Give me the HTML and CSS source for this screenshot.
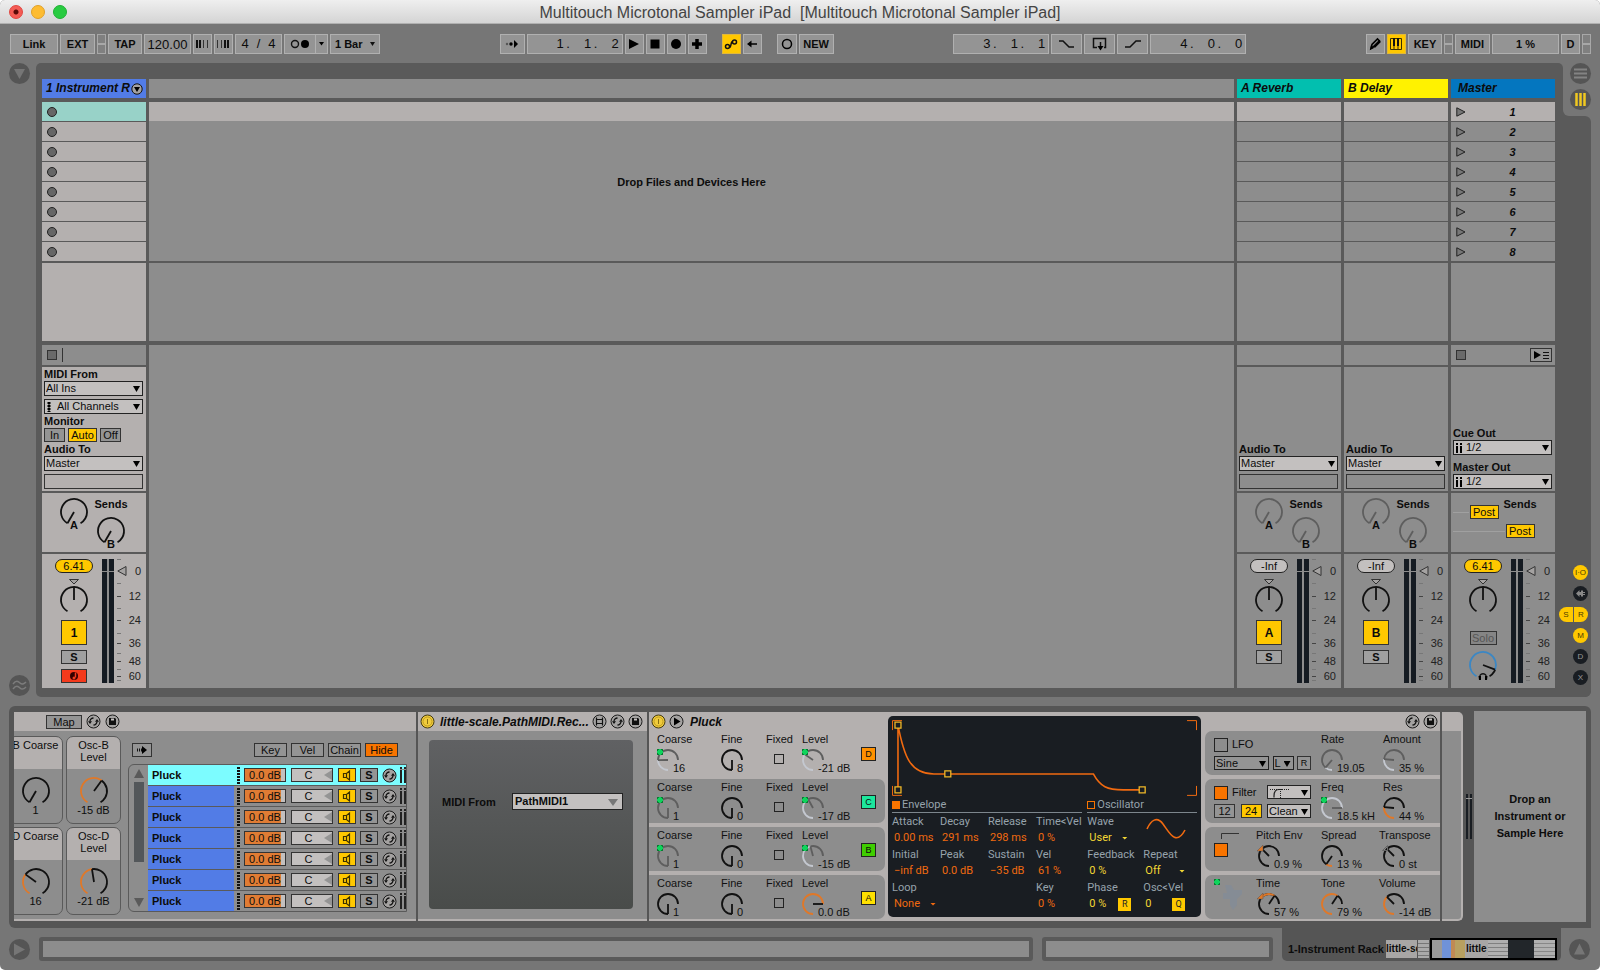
FILE: index.html
```html
<!DOCTYPE html>
<html lang="en">
<head>
<meta charset="utf-8">
<title>Multitouch Microtonal Sampler iPad</title>
<link rel="stylesheet" href="styles.css">
</head>
<body>
<svg class="defs" aria-hidden="true">
  <symbol id="knob" viewBox="0 0 30 30"><g transform="translate(15 15)"><circle class="ring" r="13" pathLength="360"/><circle class="arc" r="13" pathLength="360"/><line class="ptr" x2="13"/></g></symbol>
  <symbol id="dial" viewBox="0 0 22 22"><g transform="translate(11 11)"><circle class="dring" r="10" pathLength="360"/><circle class="darc" r="10" pathLength="360"/><line class="dptr" x2="10"/></g></symbol>
  <symbol id="map" viewBox="0 0 6 6"><path d="M0 0h6v6H0z" fill="#0b7a34"/><path d="M1 1h4v4H1zM2 0h2v6H2zM0 2h6v2H0z" fill="#0fd45c"/></symbol>
  <symbol id="swap" viewBox="0 0 15 15"><circle cx="7.500" cy="7.500" r="6.500" fill="#a4a2a1" stroke="#1c1c1c"/><path d="M4 7.500A3.500 3.500 0 0 1 7.500 4M11 7.500A3.500 3.500 0 0 1 7.500 11" fill="none" stroke="#111" stroke-width="1.300"/><path d="M2 7.300h4L4 10zM9 7.700h4L11 5z" fill="#111"/></symbol>
  <symbol id="save" viewBox="0 0 15 15"><circle cx="7.500" cy="7.500" r="6.500" fill="#a4a2a1" stroke="#1c1c1c"/><path d="M4 4h6l1 1v6H4z" fill="#111"/><path d="M6 4.500h3v2H6z" fill="#c4c0bf"/></symbol>
  <symbol id="power" viewBox="0 0 15 15"><circle cx="7.500" cy="7.500" r="6.500" fill="#f0cc3c" stroke="#443a10"/><circle cx="7.500" cy="7.500" r="4.500" fill="none" stroke="#c09c20"/><path d="M7.500 5v5" stroke="#8a7010"/></symbol>
  <symbol id="speaker" viewBox="0 0 16 13"><path d="M4.500 4.500h3l3-2.500v9l-3-2.500h-3zM7.500 4.500v4" fill="none" stroke="#3a3000" stroke-width="1.200"/></symbol>
  <symbol id="handle" viewBox="0 0 10 10"><path d="M9 .5v9L.8 5z" fill="#a4a2a1" stroke="#333"/></symbol>
  <symbol id="pan" viewBox="0 0 10 6"><path d="M.5.500h9L5 5z" fill="#a4a2a1" stroke="#333"/></symbol>
  <symbol id="launch" viewBox="0 0 10 10"><path d="M.8.800v8.400L9 5z" fill="#777" stroke="#222"/></symbol>
  <symbol id="ticks" viewBox="0 0 5 124"><path d="M0 37.500h4M0 61.500h4M0 84.500h4M0 102.500h4M0 117.500h4" stroke="#444"/><path d="M0 .5h4M0 24.500h4M0 49.500h4M0 74.500h4M0 94.500h4M0 110.500h4M0 121.500h4" stroke="#777"/></symbol>
</svg>
<div class="app">
  <header class="titlebar">
    <span class="light red"></span><span class="light amber"></span><span class="light green"></span>
    <h1>Multitouch Microtonal Sampler iPad&nbsp; [Multitouch Microtonal Sampler iPad]</h1>
  </header>

  <nav class="toolbar">
    <div class="group">
      <button class="tb w48">Link</button><button class="tb w35">EXT</button>
      <span class="leds"><i></i><i></i></span>
      <button class="tb w34">TAP</button>
      <input class="tb tempo" aria-label="Tempo" value="120.00">
      <button class="tb w19" aria-label="Nudge down"><svg width="13" height="10"><path d="M1 1v8M4 1v8" stroke="#111" stroke-width="2"/><path d="M7.500 1v8M11.500 1v8" stroke="#333"/></svg></button>
      <button class="tb w19" aria-label="Nudge up"><svg width="13" height="10"><path d="M.5 1v8M4.500 1v8" stroke="#333"/><path d="M8 1v8M11 1v8" stroke="#111" stroke-width="2"/></svg></button>
      <div class="tb sig"><span>4</span><span>/</span><span>4</span></div>
      <button class="tb w44" aria-label="Metronome"><svg width="38" height="18"><circle cx="8" cy="9" r="3.500" fill="none" stroke="#111" stroke-width="1.400"/><circle cx="18" cy="9" r="4" fill="#000"/><path d="M28.500 0v18" stroke="#b0b0b0"/><path d="M32 7h5l-2.500 3.500z"/></svg></button>
      <span class="tb barsel"><select aria-label="Quantization"><option>1 Bar</option></select></span>
    </div>
    <div class="group">
      <button class="tb w25" aria-label="Follow"><svg width="14" height="10"><circle cx="2" cy="5" r="1.200" fill="#555"/><circle cx="6" cy="5" r="1.700"/><path d="M9 1v8l4-4z"/></svg></button>
      <div class="tb pos"><span>1&thinsp;.</span><span>1&thinsp;.</span><span>2</span></div>
      <button class="tb w19" aria-label="Play"><svg width="12" height="12"><path d="M1 1v10l10-5z"/></svg></button>
      <button class="tb w19" aria-label="Stop"><svg width="12" height="12"><path d="M1.500 1.500h9v9h-9z"/></svg></button>
      <button class="tb w19" aria-label="Record"><svg width="12" height="12"><circle cx="6" cy="6" r="5"/></svg></button>
      <button class="tb w19" aria-label="Overdub"><svg width="12" height="12"><path d="M6 1v10M1 6h10" stroke="#000" stroke-width="3.500"/></svg></button>
      <button class="tb w19 on apart" aria-label="Automation arm"><svg width="14" height="12"><g fill="none" stroke="#111" stroke-width="1.500"><circle cx="3.500" cy="8.500" r="2"/><circle cx="10.500" cy="4" r="2"/><path d="M5.500 9.500c2 0 1-6 3-6"/></g></svg></button>
      <button class="tb w19" aria-label="Re-enable automation"><svg width="12" height="12"><path d="M4 6h7" stroke="#000" stroke-width="1.500"/><path d="M1 6l4.500-3.500v7z"/></svg></button>
      <button class="tb w20 apart" aria-label="Session record"><svg width="12" height="12"><circle cx="6" cy="6" r="4.500" fill="none" stroke="#000" stroke-width="1.500"/></svg></button>
      <button class="tb w35">NEW</button>
    </div>
    <div class="group">
      <div class="tb pos"><span>3&thinsp;.</span><span>1&thinsp;.</span><span>1</span></div>
      <button class="tb w31" aria-label="Punch in"><svg width="18" height="12"><path d="M1 3h4l6 6h5" fill="none" stroke="#111" stroke-width="1.500"/></svg></button>
      <button class="tb w31" aria-label="Loop"><svg width="18" height="14"><path d="M6 10.500H2.500v-9h12v9H13" fill="none" stroke="#111" stroke-width="1.500"/><path d="M9.500 5v5" stroke="#111" stroke-width="1.500"/><path d="M6.500 9h6l-3 4.500z"/></svg></button>
      <button class="tb w31" aria-label="Punch out"><svg width="18" height="12"><path d="M1 9h5l6-6h5" fill="none" stroke="#111" stroke-width="1.500"/></svg></button>
      <div class="tb pos"><span>4&thinsp;.</span><span>0&thinsp;.</span><span>0</span></div>
    </div>
    <div class="group">
      <button class="tb w19" aria-label="Draw"><svg width="14" height="14"><path d="M3 11.500l1-4L9.500 2l2 2-5.500 5.500z" fill="none" stroke="#000" stroke-width="1.600"/><path d="M2 13l1-5 3 3z"/><path d="M6 10l6-6" stroke="#000" stroke-width="2.500"/></svg></button>
      <button class="tb w19 on" aria-label="Computer keyboard"><svg width="14" height="14"><path d="M1.500 1.500h11v11h-11zM5 9v3M9 9v3" fill="none" stroke="#3a3000"/><path d="M4 1h2v8H4zM8 1h2v8H8z" fill="#111"/></svg></button>
      <button class="tb w34">KEY</button><span class="leds"><i></i><i></i></span>
      <button class="tb w35">MIDI</button><div class="tb cpu">1 %</div><button class="tb w19">D</button><span class="leds"><i></i><i></i></span>
    </div>
  </nav>

  <main class="session">
    <div class="rail">
      <button class="orb" aria-label="Show browser"><svg width="21" height="21"><path d="M5 6h11l-5.500 10z" fill="#767676"/></svg></button>
      <button class="orb" aria-label="Groove pool"><svg width="21" height="21"><path d="M4 9c3-4 5-3 7-1s4 1 6-1M4 14c3-4 5-3 7-1s4 1 6-1" fill="none" stroke="#7c7c7c" stroke-width="1.500"/></svg></button>
    </div>
    <div class="tracks">
      <section class="col track">
        <div class="head blue"><h2>1 Instrument R</h2><svg width="12" height="12"><circle cx="6" cy="6" r="5.200" fill="#a4a2a1" stroke="#111"/><path d="M3 4h6L6 9z"/></svg></div>
        <div class="slots"><div class="slot mint"><i></i></div><div class="slot"><i></i></div><div class="slot"><i></i></div><div class="slot"><i></i></div><div class="slot"><i></i></div><div class="slot"><i></i></div><div class="slot"><i></i></div><div class="slot"><i></i></div></div>
        <div class="fill"></div>
        <div class="stoprow"><i class="stop"></i><i class="bar"></i></div>
        <div class="io">
          <label for="mf">MIDI From</label>
          <span class="sel"><select id="mf"><option>All Ins</option></select></span>
          <span class="sel iconed second"><svg width="4" height="10"><path d="M2 0v10" stroke="#000" stroke-width="3" stroke-dasharray="2 1"/><path d="M2 0v10" stroke="#000"/></svg><select aria-label="MIDI channel"><option>All Channels</option></select></span>
          <span class="cap">Monitor</span>
          <div class="monitor"><button class="btn">In</button><button class="btn yellow">Auto</button><button class="btn">Off</button></div>
          <label for="at1">Audio To</label>
          <span class="sel"><select id="at1"><option>Master</option></select></span>
          <div class="blank"></div>
        </div>
        <div class="sends">
          <div class="send"><svg class="knob" style="--v:0"><use href="#knob"/></svg><b>A</b></div>
          <div class="send"><b class="ttl">Sends</b><svg class="knob" style="--v:0"><use href="#knob"/></svg><b>B</b></div>
        </div>
        <div class="mixer">
          <div class="strip"><span class="pill yellow">6.41</span><svg class="pan"><use href="#pan"/></svg><svg class="knob" style="--v:.5"><use href="#knob"/></svg><button class="act">1</button><button class="btn solo">S</button><button class="btn arm" aria-label="Arm"><svg width="10" height="10"><circle cx="5" cy="5" r="4" fill="#300"/><path d="M6.500 1.500v5" stroke="#f43a1c" stroke-width="1.500"/><circle cx="5" cy="7" r="1.500" fill="#f43a1c"/></svg></button></div>
          <div class="meter"></div>
          <div class="ticks"><svg class="handle"><use href="#handle"/></svg><svg class="tk"><use href="#ticks"/></svg></div>
          <div class="scale"><span>0</span><span>12</span><span>24</span><span>36</span><span>48</span><span>60</span></div>
        </div>
      </section>

      <section class="col drop">
        <div class="head"></div>
        <div class="zone"><div class="slot lit"></div><p>Drop Files and Devices Here</p></div>
        <div class="fill"></div>
        <div class="lower"></div>
      </section>

      <section class="col">
        <div class="head teal"><h2>A Reverb</h2></div>
        <div class="slots"><div class="slot lit"></div><div class="slot"></div><div class="slot"></div><div class="slot"></div><div class="slot"></div><div class="slot"></div><div class="slot"></div><div class="slot"></div></div>
        <div class="fill"></div>
        <div class="stoprow"></div>
        <div class="io">
          <label for="at2">Audio To</label>
          <span class="sel"><select id="at2"><option>Master</option></select></span>
          <div class="blank"></div>
        </div>
        <div class="sends dim">
          <div class="send"><svg class="knob" style="--v:0"><use href="#knob"/></svg><b>A</b></div>
          <div class="send"><b class="ttl">Sends</b><svg class="knob" style="--v:0"><use href="#knob"/></svg><b>B</b></div>
        </div>
        <div class="mixer">
          <div class="strip"><span class="pill">-Inf</span><svg class="pan"><use href="#pan"/></svg><svg class="knob" style="--v:.5"><use href="#knob"/></svg><button class="act">A</button><button class="btn solo">S</button></div>
          <div class="meter"></div>
          <div class="ticks"><svg class="handle"><use href="#handle"/></svg><svg class="tk"><use href="#ticks"/></svg></div>
          <div class="scale"><span>0</span><span>12</span><span>24</span><span>36</span><span>48</span><span>60</span></div>
        </div>
      </section>

      <section class="col">
        <div class="head lemon"><h2>B Delay</h2></div>
        <div class="slots"><div class="slot lit"></div><div class="slot"></div><div class="slot"></div><div class="slot"></div><div class="slot"></div><div class="slot"></div><div class="slot"></div><div class="slot"></div></div>
        <div class="fill"></div>
        <div class="stoprow"></div>
        <div class="io">
          <label for="at3">Audio To</label>
          <span class="sel"><select id="at3"><option>Master</option></select></span>
          <div class="blank"></div>
        </div>
        <div class="sends dim">
          <div class="send"><svg class="knob" style="--v:0"><use href="#knob"/></svg><b>A</b></div>
          <div class="send"><b class="ttl">Sends</b><svg class="knob" style="--v:0"><use href="#knob"/></svg><b>B</b></div>
        </div>
        <div class="mixer">
          <div class="strip"><span class="pill">-Inf</span><svg class="pan"><use href="#pan"/></svg><svg class="knob" style="--v:.5"><use href="#knob"/></svg><button class="act">B</button><button class="btn solo">S</button></div>
          <div class="meter"></div>
          <div class="ticks"><svg class="handle"><use href="#handle"/></svg><svg class="tk"><use href="#ticks"/></svg></div>
          <div class="scale"><span>0</span><span>12</span><span>24</span><span>36</span><span>48</span><span>60</span></div>
        </div>
      </section>

      <section class="col">
        <div class="head navy"><h2>Master</h2></div>
        <div class="slots scenes"><div class="slot lit"><svg><use href="#launch"/></svg><b>1</b></div><div class="slot"><svg><use href="#launch"/></svg><b>2</b></div><div class="slot"><svg><use href="#launch"/></svg><b>3</b></div><div class="slot"><svg><use href="#launch"/></svg><b>4</b></div><div class="slot"><svg><use href="#launch"/></svg><b>5</b></div><div class="slot"><svg><use href="#launch"/></svg><b>6</b></div><div class="slot"><svg><use href="#launch"/></svg><b>7</b></div><div class="slot"><svg><use href="#launch"/></svg><b>8</b></div></div>
        <div class="fill"></div>
        <div class="stoprow"><i class="stop"></i><button class="btn back" aria-label="Back to arrangement"><svg width="18" height="10"><path d="M2 1v8l7-4z"/><path d="M11 2.500h6M11 5.500h6M11 8.500h6" stroke="#111"/></svg></button></div>
        <div class="io">
          <label for="co">Cue Out</label>
          <span class="sel iconed"><svg width="6" height="10"><path d="M1 0v2M5 0v2M1 3v7M5 3v7" stroke="#000" stroke-width="2"/></svg><select id="co"><option>1/2</option></select></span>
          <label class="mo" for="mo">Master Out</label>
          <span class="sel iconed"><svg width="6" height="10"><path d="M1 0v2M5 0v2M1 3v7M5 3v7" stroke="#000" stroke-width="2"/></svg><select id="mo"><option>1/2</option></select></span>
        </div>
        <div class="sends posts">
          <div class="send"><button class="btn yellow">Post</button></div>
          <div class="send"><b class="ttl">Sends</b><button class="btn yellow">Post</button></div>
        </div>
        <div class="mixer">
          <div class="strip"><span class="pill yellow">6.41</span><svg class="pan"><use href="#pan"/></svg><svg class="knob" style="--v:.5"><use href="#knob"/></svg><button class="btn cuesolo">Solo</button><svg class="knob cue" style="--v:.87"><use href="#knob"/><path d="M12.500 29c-4-7 9-7 5 0" fill="none" stroke="#111" stroke-width="1.300"/><path d="M10.500 26h2.500v4h-2zM17 26h2.500l-.5 4h-2z"/></svg></div>
          <div class="meter"></div>
          <div class="ticks"><svg class="handle"><use href="#handle"/></svg><svg class="tk"><use href="#ticks"/></svg></div>
          <div class="scale"><span>0</span><span>12</span><span>24</span><span>36</span><span>48</span><span>60</span></div>
        </div>
      </section>
    </div>
    <div class="side">
      <div class="tabs">
        <button class="orb" aria-label="Arrangement"><svg width="21" height="21"><path d="M4 6.500h13M4 10.500h13M4 14.500h13" stroke="#838383" stroke-width="2"/></svg></button>
        <button class="orb" aria-label="Session"><svg width="21" height="21"><path d="M6.500 4v13M10.500 4v13M14.500 4v13" stroke="#f0c820" stroke-width="2.500"/></svg></button>
      </div>
      <div class="toggles">
        <button class="dot on">I·O</button>
        <button class="dot" aria-label="Returns"><svg width="15" height="15"><path d="M3 7.500L6.500 4v2H8V4.500h2V6h2v1H10v1h2v1h-2v1.500H8V9H6.500v2z" fill="#888"/></svg></button>
        <span class="pair"><button class="on">S</button><button class="on">R</button></span>
        <button class="dot on">M</button><button class="dot">D</button><button class="dot">X</button>
      </div>
    </div>
  </main>

  <section class="devices">
    <article class="rack">
      <div class="dhead"><button class="btn mapbtn">Map</button><svg class="ic"><use href="#swap"/></svg><svg class="ic"><use href="#save"/></svg></div>
      <div class="rackbody">
        <div class="macros">
          <div class="macro"><span>B Coarse</span><svg class="knob" style="--v:0"><use href="#knob"/></svg><em>1</em></div>
          <div class="macro"><span>Osc-B<br>Level</span><svg class="knob" style="--v:.62"><use href="#knob"/></svg><em>-15 dB</em></div>
          <div class="macro"><span>D Coarse</span><svg class="knob" style="--v:.32"><use href="#knob"/></svg><em>16</em></div>
          <div class="macro"><span>Osc-D<br>Level</span><svg class="knob" style="--v:.47"><use href="#knob"/></svg><em>-21 dB</em></div>
        </div>
        <div class="chains">
          <div class="chbar"><button class="btn auto" aria-label="Auto select"><svg width="12" height="8"><path d="M1 4h5" stroke="#111" stroke-width="3" stroke-dasharray="1 1"/><path d="M6 0v8l5-4z"/></svg></button><button class="btn first">Key</button><button class="btn">Vel</button><button class="btn">Chain</button><button class="btn orange">Hide</button></div>
          <div class="chbox">
            <div class="scroll"><svg width="10" height="9"><path d="M5 0l5 9H0z" fill="#5a5a5a"/></svg><i></i><svg width="10" height="9"><path d="M5 9L0 0h10z" fill="#5a5a5a"/></svg></div>
            <div class="chlist">
              <div class="chain sel1"><b>Pluck</b><i class="dots"></i><span class="vol">0.0 dB</span><span class="cpan">C</span><button class="btn yellow" aria-label="Activate"><svg width="16" height="13"><use href="#speaker"/></svg></button><button class="btn">S</button><svg class="ic"><use href="#swap"/></svg><i class="mm"></i></div>
              <div class="chain"><b>Pluck</b><i class="dots"></i><span class="vol">0.0 dB</span><span class="cpan">C</span><button class="btn yellow" aria-label="Activate"><svg width="16" height="13"><use href="#speaker"/></svg></button><button class="btn">S</button><svg class="ic"><use href="#swap"/></svg><i class="mm"></i></div>
              <div class="chain"><b>Pluck</b><i class="dots"></i><span class="vol">0.0 dB</span><span class="cpan">C</span><button class="btn yellow" aria-label="Activate"><svg width="16" height="13"><use href="#speaker"/></svg></button><button class="btn">S</button><svg class="ic"><use href="#swap"/></svg><i class="mm"></i></div>
              <div class="chain"><b>Pluck</b><i class="dots"></i><span class="vol">0.0 dB</span><span class="cpan">C</span><button class="btn yellow" aria-label="Activate"><svg width="16" height="13"><use href="#speaker"/></svg></button><button class="btn">S</button><svg class="ic"><use href="#swap"/></svg><i class="mm"></i></div>
              <div class="chain"><b>Pluck</b><i class="dots"></i><span class="vol">0.0 dB</span><span class="cpan">C</span><button class="btn yellow" aria-label="Activate"><svg width="16" height="13"><use href="#speaker"/></svg></button><button class="btn">S</button><svg class="ic"><use href="#swap"/></svg><i class="mm"></i></div>
              <div class="chain"><b>Pluck</b><i class="dots"></i><span class="vol">0.0 dB</span><span class="cpan">C</span><button class="btn yellow" aria-label="Activate"><svg width="16" height="13"><use href="#speaker"/></svg></button><button class="btn">S</button><svg class="ic"><use href="#swap"/></svg><i class="mm"></i></div>
              <div class="chain"><b>Pluck</b><i class="dots"></i><span class="vol">0.0 dB</span><span class="cpan">C</span><button class="btn yellow" aria-label="Activate"><svg width="16" height="13"><use href="#speaker"/></svg></button><button class="btn">S</button><svg class="ic"><use href="#swap"/></svg><i class="mm"></i></div>
            </div>
          </div>
        </div>
      </div>
    </article>

    <article class="m4l">
      <div class="dhead"><svg class="ic"><use href="#power"/></svg><h3>little-scale.PathMIDI.Rec...</h3><svg class="ic" viewBox="0 0 15 15"><circle cx="7.500" cy="7.500" r="6.500" fill="#a4a2a1" stroke="#1c1c1c"/><path d="M4.500 5.500h6v4h-6zM4.500 3.500v8M10.500 3.500v8" fill="none" stroke="#111" stroke-width="1.200"/></svg><svg class="ic"><use href="#swap"/></svg><svg class="ic"><use href="#save"/></svg></div>
      <div class="patch"><label for="pm">MIDI From</label><span class="sel hollow"><select id="pm"><option>PathMIDI1</option></select></span></div>
    </article>

    <article class="operator">
      <div class="oscs">
        <div class="dhead"><svg class="ic"><use href="#power"/></svg><svg class="ic" viewBox="0 0 15 15"><circle cx="7.500" cy="7.500" r="6.500" fill="#a4a2a1" stroke="#1c1c1c"/><path d="M5 3.500v8l6.500-4z"/></svg><h3>Pluck</h3></div>
        <div class="osc clear">
          <div class="ctl"><span>Coarse</span><div><svg class="dial mapped" style="--v:.33"><use href="#dial"/><use href="#map" width="6" height="6"/></svg><em>16</em></div></div>
          <div class="ctl"><span>Fine</span><div><svg class="dial" style="--v:0"><use href="#dial"/></svg><em>8</em></div></div>
          <label class="ctl mid">Fixed<input type="checkbox"></label>
          <div class="ctl"><span>Level</span><div><svg class="dial mapped" style="--v:.46"><use href="#dial"/><use href="#map" width="6" height="6"/></svg><em>-21 dB</em></div></div>
          <button class="letter lo">D</button>
        </div>
        <div class="osc">
          <div class="ctl"><span>Coarse</span><div><svg class="dial mapped" style="--v:0"><use href="#dial"/><use href="#map" width="6" height="6"/></svg><em>1</em></div></div>
          <div class="ctl"><span>Fine</span><div><svg class="dial" style="--v:0"><use href="#dial"/></svg><em>0</em></div></div>
          <label class="ctl mid">Fixed<input type="checkbox"></label>
          <div class="ctl"><span>Level</span><div><svg class="dial mapped" style="--v:.56"><use href="#dial"/><use href="#map" width="6" height="6"/></svg><em>-17 dB</em></div></div>
          <button class="letter lc">C</button>
        </div>
        <div class="osc">
          <div class="ctl"><span>Coarse</span><div><svg class="dial mapped" style="--v:0"><use href="#dial"/><use href="#map" width="6" height="6"/></svg><em>1</em></div></div>
          <div class="ctl"><span>Fine</span><div><svg class="dial" style="--v:0"><use href="#dial"/></svg><em>0</em></div></div>
          <label class="ctl mid">Fixed<input type="checkbox"></label>
          <div class="ctl"><span>Level</span><div><svg class="dial mapped" style="--v:.61"><use href="#dial"/><use href="#map" width="6" height="6"/></svg><em>-15 dB</em></div></div>
          <button class="letter lb">B</button>
        </div>
        <div class="osc">
          <div class="ctl"><span>Coarse</span><div><svg class="dial" style="--v:0"><use href="#dial"/></svg><em>1</em></div></div>
          <div class="ctl"><span>Fine</span><div><svg class="dial" style="--v:0"><use href="#dial"/></svg><em>0</em></div></div>
          <label class="ctl mid">Fixed<input type="checkbox"></label>
          <div class="ctl"><span>Level</span><div><svg class="dial" style="--v:1"><use href="#dial"/></svg><em>0.0 dB</em></div></div>
          <button class="letter la">A</button>
        </div>
      </div>

      <div class="display">
        <svg class="graph" viewBox="0 0 306 76"><g fill="none" stroke="#f06a10" stroke-width="1"><path d="M.5 10V.5H10M296 .5h9.500V10M.5 66v9.500H10M296 75.500h9.500V66"/><path stroke-width="1.600" d="M6 70V5C12 36 18 54 42 54H202C209 67 216 70 232 70H251"/></g><g fill="#191d22" stroke="#f0b828" stroke-width="1.300"><path d="M3 2h6v6H3zM3 67h6v6H3zM53 51h6v6h-6zM248 67h6v6h-6z"/></g></svg>
        <div class="params">
          <div class="env">
            <h4><i></i>Envelope</h4>
            <dl><dt>Attack</dt><dd>0.00 ms</dd></dl><dl><dt>Decay</dt><dd>291 ms</dd></dl><dl><dt>Release</dt><dd>298 ms</dd></dl><dl><dt>Time&lt;Vel</dt><dd>0 %</dd></dl>
            <dl><dt>Initial</dt><dd>−inf dB</dd></dl><dl><dt>Peak</dt><dd>0.0 dB</dd></dl><dl><dt>Sustain</dt><dd>−35 dB</dd></dl><dl><dt>Vel</dt><dd>61 %</dd></dl>
            <dl class="wide"><dt>Loop</dt><dd>None <u></u></dd></dl><dl><dt>Key</dt><dd>0 %</dd></dl>
          </div>
          <div class="wav">
            <h4><i class="open"></i>Oscillator</h4>
            <dl><dt>Wave</dt><dd>User <u></u></dd></dl><svg width="42" height="24"><path d="M3 12C7 3 13-1 19 7S32 30 41 13" fill="none" stroke="#f06a10" stroke-width="1.600"/></svg>
            <dl><dt>Feedback</dt><dd>0 %</dd></dl><dl><dt>Repeat</dt><dd class="spread">Off <u></u></dd></dl>
            <dl><dt>Phase</dt><dd class="spread">0 % <button>R</button></dd></dl><dl><dt>Osc&lt;Vel</dt><dd class="spread">0 <button>Q</button></dd></dl>
          </div>
        </div>
      </div>

      <div class="globals">
        <div class="dhead end"><svg class="ic"><use href="#swap"/></svg><svg class="ic"><use href="#save"/></svg></div>
        <div class="grow">
          <div class="opts">
            <label class="chk"><input type="checkbox">LFO</label>
            <div class="line"><span class="sel gray s55"><select aria-label="LFO wave"><option>Sine</option></select></span><span class="sel gray s21"><select aria-label="LFO range"><option>L</option></select></span><button class="btn r14">R</button></div>
          </div>
          <div class="ctl"><span>Rate</span><div><svg class="dial off" style="--v:.15"><use href="#dial"/></svg><em>19.05</em></div></div>
          <div class="ctl"><span>Amount</span><div><svg class="dial off" style="--v:.35"><use href="#dial"/></svg><em>35 %</em></div></div>
        </div>
        <div class="grow">
          <div class="opts">
            <div class="line"><label class="chk"><input type="checkbox" checked>Filter</label><span class="sel s44 ftype"><svg width="20" height="10"><path d="M4 9.500V8c0-5 2-6.500 5-6.500h3" fill="none" stroke="#222" stroke-width="1.200"/><path d="M0 1.500h20M10.500 3v7" stroke="#222" stroke-dasharray="1 1"/></svg><select aria-label="Filter type"><option></option></select></span></div>
            <div class="line"><button class="btn s21">12</button><button class="btn yellow s21">24</button><span class="sel s44"><select aria-label="Circuit"><option>Clean</option></select></span></div>
          </div>
          <div class="ctl"><span>Freq</span><div><svg class="dial off" style="--v:1"><use href="#dial"/><use href="#map" width="6" height="6"/></svg><em>18.5 kH</em></div></div>
          <div class="ctl"><span>Res</span><div><svg class="dial" style="--v:.35"><use href="#dial"/></svg><em>44 %</em></div></div>
        </div>
        <div class="grow four">
          <div class="opts one"><svg width="26" height="8"><path d="M7.500 8V2.500H25" fill="none" stroke="#333"/></svg><label class="chk"><input type="checkbox" checked aria-label="Pitch envelope"></label></div>
          <div class="ctl"><span>Pitch Env</span><div><svg class="dial none inset" style="--v:.5"><use href="#dial"/><path d="M-1 6L5 0v6z" fill="#e07828" stroke="#555" stroke-width=".5"/></svg><em>0.9 %</em></div></div>
          <div class="ctl"><span>Spread</span><div><svg class="dial" style="--v:.13"><use href="#dial"/></svg><em>13 %</em></div></div>
          <div class="ctl"><span>Transpose</span><div><svg class="dial none" style="--v:.5"><use href="#dial"/><path d="M-.5 5.500L4.500.500v5z" fill="none" stroke="#666"/></svg><em>0 st</em></div></div>
        </div>
        <div class="grow four">
          <div class="opts one"><svg width="30" height="34"><use href="#map" width="6" height="6"/><path d="M11 6h6l3 5h8v4l-5 5v6l-4 5-3-5v-6H9v-6h4z" fill="#7d8ca0" opacity=".45"/></svg></div>
          <div class="ctl"><span>Time</span><div><svg class="dial bi inset" style="--v:.79"><use href="#dial"/><path d="M-1 6L5 0v6z" fill="#e07828" stroke="#555" stroke-width=".5"/></svg><em>57 %</em></div></div>
          <div class="ctl"><span>Tone</span><div><svg class="dial" style="--v:.79"><use href="#dial"/></svg><em>79 %</em></div></div>
          <div class="ctl"><span>Volume</span><div><svg class="dial" style="--v:.5"><use href="#dial"/></svg><em>-14 dB</em></div></div>
        </div>
      </div>
    </article>
    <div class="rackend"></div>
    <i class="outmeter"></i>
    <p class="dropdev">Drop an<br>Instrument or<br>Sample Here</p>
  </section>

  <footer class="footer">
    <button class="orb" aria-label="Preview"><svg width="21" height="21"><path d="M5 4.500v12l11-6z" fill="#767676"/></svg></button>
    <div class="field long"></div>
    <div class="field"></div>
    <div class="overview">
      <b>1-Instrument Rack</b>
      <div class="mini m1">little-sc</div><div class="mini m2"></div>
      <div class="mini m3"><i class="a"></i><span>little</span><i class="b"></i><i class="c"></i><i class="d"></i></div>
    </div>
    <button class="orb" aria-label="Hide devices"><svg width="21" height="21"><path d="M10.500 4.500l5.500 11H5z" fill="#767676"/></svg></button>
  </footer>
</div>
</body>
</html>
```

FILE: styles.css
```css
* { box-sizing: border-box; }
body { margin: 0; background: #fff; font: 11px/14px "Liberation Sans", Arial, sans-serif; color: #0c0c0c; }
h1, h2, h3, h4, p, dl, dd { margin: 0; }
em { font-style: normal; }
svg { display: block; flex: none; }
button, input, select { font: inherit; color: inherit; margin: 0; padding: 0; border-radius: 0; }
.defs { position: absolute; width: 0; height: 0; }
.app { min-height: 100vh; display: flex; flex-direction: column; background: #767676; border-radius: 5px; overflow: hidden; }

.titlebar { position: relative; height: 24px; display: flex; align-items: center; gap: 8px; padding: 0 9px; background: linear-gradient(#efefef, #d4d4d4); border-bottom: 1px solid #b0b0b0; }
.titlebar h1 { position: absolute; inset: 0; text-align: center; font-size: 16px; line-height: 25px; font-weight: 400; color: #444; }
.light { width: 14px; height: 14px; border-radius: 50%; }
.red { background: radial-gradient(#5a0a08 2px, #f45b54 3px); border: 1px solid #e0443e; }
.amber { background: #fdbc32; border: 1px solid #e0a028; }
.green { background: #28cb41; border: 1px solid #1fb034; }

.toolbar { height: 39px; display: flex; justify-content: space-between; padding: 10px 9px 0 10px; }
.group { display: flex; gap: 2px; }
.tb { height: 20px; border: 1px solid #b0b0b0; background: #949494; font-weight: 700; line-height: 18px; display: flex; align-items: center; justify-content: center; }
.tb.on { background: #ffc800; border-color: #e0b83c; }
.leds { width: 9px; display: grid; gap: 0; height: 20px; }
.leds i { border: 1px solid #a8a8a8; background: #808080; }
.apart { margin-left: 13px; }
.w19 { width: 19px; } .w20 { width: 20px; } .w25 { width: 25px; } .w31 { width: 31px; } .w34 { width: 34px; } .w35 { width: 35px; } .w44 { width: 44px; } .w48 { width: 48px; }
.tempo { width: 47px; font-size: 13px; font-weight: 400; text-align: center; }
.sig { width: 47px; gap: 8px; font-size: 13px; font-weight: 400; }
.pos { width: 96px; justify-content: flex-end; gap: 14px; padding-right: 3px; font-size: 13px; font-weight: 400; }
.cpu { width: 67px; }
.barsel { position: relative; width: 50px; }
.barsel select { appearance: none; border: 0; background: none; width: 100%; padding-left: 4px; font-weight: 700; }
.barsel::after { content: ""; position: absolute; right: 4px; top: 7px; width: 5px; height: 4px; background: #111; clip-path: polygon(0 0, 100% 0, 50% 100%); }

.orb { width: 21px; height: 21px; border: 0; border-radius: 50%; background: #555; }
.session { flex: 1; display: flex; padding-right: 9px; }
.rail { width: 36px; display: flex; flex-direction: column; justify-content: space-between; padding: 0 0 1px 9px; }
.tracks { flex: 1; display: grid; grid-template-columns: 104px 1fr 104px 104px 104px; gap: 3px; background: #5a5a5a; border-radius: 5px 5px 0 5px; padding: 16px 8px 9px 6px; }
.col { display: flex; flex-direction: column; min-width: 0; }
.head { height: 19px; margin-bottom: 4px; background: #8d8d8d; display: flex; align-items: center; padding: 0 3px 0 4px; overflow: hidden; }
.head h2 { flex: 1; font: italic 700 12px/19px "Liberation Sans", Arial, sans-serif; white-space: nowrap; min-width: 0; }
.blue { background: #527ce6; } .teal { background: #02bfaf; } .lemon { background: #fff200; } .navy { background: #0476bf; padding-left: 7px; }
.slots { display: grid; gap: 1px; margin-bottom: 2px; }
.slot { height: 19px; background: #8d8d8d; display: flex; align-items: center; padding-left: 5px; }
.slot i { width: 10px; height: 10px; border-radius: 50%; background: #666; border: 1px solid #222; }
.track .slot, .track .fill, .track .io, .track .sends, .track .mixer, .slot.lit { background: #b4b0af; }
.track .slot.mint { background: #98d2c8; }
.scenes svg { width: 10px; height: 10px; }
.scenes .slot b { flex: 1; text-align: center; font-style: italic; padding: 0 8px 0 12px; }
.fill { flex: 1; min-height: 78px; background: #8d8d8d; margin-bottom: 4px; }
.zone { height: 159px; background: #8d8d8d; margin-bottom: 2px; text-align: center; font-weight: 700; }
.zone p { padding-top: 54px; }
.lower { height: 343px; background: #8d8d8d; }
.stoprow { height: 20px; background: #8d8d8d; margin-bottom: 2px; display: flex; align-items: center; padding: 0 3px 0 5px; }
.stop { width: 10px; height: 10px; background: #6a6a6a; border: 1px solid #333; }
.bar { width: 1px; height: 14px; background: #333; margin-left: 5px; }
.back { margin-left: auto; width: 22px; }
.io { height: 124px; background: #8d8d8d; margin-bottom: 2px; padding: 0 3px 2px 2px; display: flex; flex-direction: column; justify-content: flex-end; }
.io label, .cap { font-weight: 700; line-height: 14px; }
.io .mo { margin-top: 5px; }
.sel { position: relative; display: block; height: 15px; border: 1px solid #222; background: #c3c0bf; }
.sel select { appearance: none; display: block; border: 0; background: none; width: 100%; height: 13px; line-height: 13px; padding-left: 1px; }
.sel::after { content: ""; position: absolute; right: 2px; top: 4px; width: 7px; height: 6px; background: #000; clip-path: polygon(0 0, 100% 0, 50% 100%); pointer-events: none; }
.sel > svg { position: absolute; left: 2px; top: 2px; }
.iconed select { padding-left: 12px; }
.second { margin: 3px 0 0; }
.blank { height: 15px; border: 1px solid #333; margin-top: 3px; }
.btn { height: 14px; border: 1px solid #333; background: #949494; line-height: 12px; display: flex; align-items: center; justify-content: center; }
.btn.yellow, .pill.yellow { background: #ffc800; }
.btn.orange { background: #f87400; }
.monitor { display: flex; gap: 3px; }
.monitor .btn { width: 21px; }
.monitor .yellow { width: 29px; }

.sends { height: 59px; background: #8d8d8d; margin-bottom: 2px; display: flex; gap: 7px; padding: 4px 0 0 17px; }
.send { width: 30px; display: flex; flex-direction: column; align-items: center; }
.send b { line-height: 12px; margin-top: -8px; }
.send .ttl { margin: 1px 0 6px; }
.knob { width: 30px; height: 30px; overflow: visible; --ring: #111; --ptr: #111; --arc: none; --k: 0; }
.ring, .arc { fill: none; stroke: var(--ring); stroke-width: 1.8; transform: rotate(120deg); }
.ring { stroke-dasharray: 0px calc(var(--v) * var(--k) * 300px) calc(300px - var(--v) * var(--k) * 300px) 360px; }
.arc { stroke: var(--arc); stroke-dasharray: calc(var(--v) * 300px) 360px; }
.ptr { stroke: var(--ptr); stroke-width: 1.8; transform: rotate(calc(120deg + var(--v) * 300deg)); }
.dim .knob { --ring: #5e5e5e; --ptr: #5e5e5e; }
.knob.cue { --arc: #3b87c4; --k: 1; }
.sends.posts { gap: 6px; padding-left: 18px; background: linear-gradient(#a0a0a0, #a0a0a0) 2px 19px / 16px 1px no-repeat, linear-gradient(#a0a0a0, #a0a0a0) 2px 38px / 52px 1px no-repeat, #8d8d8d; }
.posts .btn { width: 29px; }
.posts .send:first-child { padding-top: 8px; }
.posts .ttl { margin-bottom: 14px; }
.posts .send { flex: none; width: 30px; }

.mixer { height: 134px; background: #8d8d8d; padding: 5px 0 0 13px; display: flex; }
.strip { width: 38px; margin-right: 9px; display: flex; flex-direction: column; align-items: center; }
.pill { width: 38px; height: 14px; line-height: 12px; border: 1px solid #222; border-radius: 7px; background: #c3c0bf; text-align: center; }
.pan { width: 10px; height: 6px; margin: 6px 0 0; }
.act { width: 26px; height: 25px; margin: 5px 0 5px; border: 1px solid #333; background: #ffc800; font-size: 12px; font-weight: 700; }
.solo { width: 26px; font-weight: 700; margin-bottom: 5px; background: #a0a0a0; }
.arm { width: 26px; background: #f43a1c; }
.cuesolo { width: 27px; margin: 16px 0 5px; color: #555; background: #858585; }
.meter { width: 12px; height: 124px; margin-right: 3px; background: linear-gradient(#8d8d8d, #8d8d8d) 0 12px / 12px 1px no-repeat, linear-gradient(90deg, #151b22 5px, #8d8d8d 5px, #8d8d8d 7px, #151b22 7px); }
.ticks { width: 10px; }
.handle { width: 10px; height: 10px; margin-top: 7px; }
.tk { width: 5px; height: 124px; margin-top: -17px; }
.scale { flex: 1; display: grid; grid-template-rows: 25px 24px 23px 18px 15px 14px; align-content: start; padding: 5px 5px 0 0; text-align: right; color: #222; }

.side { width: 28px; display: flex; flex-direction: column; border-radius: 0 0 6px 0; background: linear-gradient(#767676, #767676) 6px 0 / 22px 60px no-repeat, #5a5a5a; }
.tabs { height: 53px; background: #767676; border-radius: 0 0 0 6px; padding-left: 7px; display: grid; align-content: start; gap: 5px; }
.toggles { flex: 1; display: flex; flex-direction: column; align-items: flex-end; justify-content: flex-end; gap: 6px; padding: 0 3px 12px 0; font-size: 8px; border-radius: 0 6px 6px 0; background: #5a5a5a; }
.dot { width: 15px; height: 15px; border: 0; border-radius: 50%; background: #191d22; color: #999; line-height: 15px; text-align: center; }
.toggles .on { background: #ffc800; color: #4a3c00; }
.pair { display: flex; gap: 1px; margin-left: -8px; }
.pair button { width: 14px; height: 15px; border: 0; line-height: 15px; border-radius: 0 8px 8px 0; }
.pair button:first-child { border-radius: 8px 0 0 8px; }

.devices { height: 222px; margin: 9px 9px 0; padding: 6px 5px 7px; background: #555; border-radius: 6px 6px 0 6px; display: flex; }
.dhead { height: 19px; background: #b4b0af; display: flex; align-items: center; gap: 3px; padding: 0 6px 0 2px; }
.dhead h3 { flex: 1; font: italic 700 12px/18px "Liberation Sans", Arial, sans-serif; white-space: nowrap; }
.ic { width: 15px; height: 15px; }
.rack { width: 402px; background: #8d8d8d; border-bottom: 2px solid #b4b0af; overflow: hidden; }
.rack > .dhead { padding-left: 32px; gap: 4px; }
.mapbtn { width: 36px; }
.rackbody { display: flex; padding-top: 5px; }
.macros { display: grid; grid-template-columns: 55px 55px; grid-template-rows: 88px 88px; gap: 3px; margin-left: -6px; }
.macro { border: 1px solid #5a5a5a; border-radius: 7px; background: linear-gradient(#b4b0af 32px, #8d8d8d 32px); display: flex; flex-direction: column; align-items: center; text-align: center; white-space: nowrap; line-height: 12px; overflow: hidden; }
.macro span { height: 39px; padding-top: 2px; }
.macro .knob { --arc: #e07828; --k: 1; }
.macro em { line-height: 14px; margin-top: -3px; }
.chains { width: 279px; margin-left: 7px; padding-top: 7px; }
.chbar { display: flex; gap: 4px; padding-left: 4px; margin-bottom: 7px; }
.chbar .btn { width: 33px; }
.chbar .auto { width: 20px; }
.chbar .first { margin-left: 98px; }
.chbox { display: flex; height: 148px; border: 1px solid #5a5a5a; border-radius: 6px 0 0 6px; }
.scroll { width: 19px; display: flex; flex-direction: column; align-items: center; padding: 4px 0 4px; }
.scroll i { width: 10px; height: 80px; background: #53575a; margin: 4px 0 auto; }
.chlist { flex: 1; display: grid; gap: 1px; background: #5a5a5a; grid-auto-rows: 20px; }
.chain { display: flex; align-items: center; background: #8d8d8d; }
.chain b { width: 86px; line-height: 20px; padding-left: 4px; background: #527ce6; }
.sel1, .chain.sel1 b { background: #7cfcff; }
.dots { width: 3px; height: 17px; margin: 0 4px 0 3px; background: repeating-linear-gradient(#111 0 2px, transparent 2px 3px); }
.vol, .cpan { width: 42px; height: 14px; line-height: 12px; border: 1px solid #333; text-align: center; margin-right: 5px; }
.vol { background: linear-gradient(90deg, #e07c34 36px, #c3c0bf 36px); }
.cpan { background: #c3c0bf; position: relative; padding-right: 7px; }
.cpan::after { content: ""; position: absolute; right: 0; top: 1px; width: 8px; height: 10px; background: #949494; clip-path: polygon(100% 0, 100% 100%, 0 50%); }
.chain .btn { width: 18px; margin-right: 4px; font-weight: 700; }
.mm { width: 6px; height: 16px; margin-left: 3px; background: linear-gradient(transparent 2px, #8d8d8d 2px, #8d8d8d 3px, transparent 3px), linear-gradient(90deg, #222 2px, transparent 2px, transparent 4px, #222 4px); }

.m4l { width: 229px; margin: 0 2px; background: #8d8d8d; border-bottom: 2px solid #b4b0af; }
.m4l h3 { padding-left: 2px; }
.patch { margin: 9px 14px 9px 11px; height: 169px; border-radius: 4px; background: linear-gradient(#606163, #494c4a); display: flex; align-items: flex-start; justify-content: space-between; padding: 53px 10px 0 13px; }
.patch label { font-weight: 700; line-height: 17px; padding-top: 1px; }
.hollow { width: 111px; height: 17px; font-weight: 700; }
.hollow select { height: 15px; padding-left: 2px; }
.sel.hollow::after { width: 10px; height: 7px; top: 5px; background: #777; right: 4px; }

.operator { flex: 1; display: flex; background: #b4b0af; min-width: 0; }
.oscs { width: 236px; display: grid; grid-template-rows: 15px; grid-auto-rows: 44px; row-gap: 4px; }
.oscs .dhead, .globals .dhead { background: none; }
.oscs h3 { padding-left: 3px; }
.osc { display: grid; grid-template-columns: 64px 45px 36px 59px 15px; padding: 1px 0 0 8px; background: #8d8d8d; border-radius: 0 7px 7px 0; }
.osc.clear { background: none; }
.ctl { display: flex; flex-direction: column; white-space: nowrap; color: #111; }
.ctl > span { line-height: 14px; margin-bottom: 3px; }
.ctl > div { display: flex; }
.ctl em { margin: 12px 0 -6px -6px; line-height: 14px; }
.dial { width: 22px; height: 22px; overflow: visible; --ring: #111; --ptr: #111; --arc: #e07828; --k: 1; --o: 0; }
.dial.mapped, .dial.off { --ring: #5e5e5e; --ptr: #5e5e5e; --arc: #c4c8d0; }
.dial.none { --arc: none; --k: 0; }
.dial.bi { --k: 0; --o: .5; }
.dial.inset { margin-left: 2px; }
.dring, .darc { fill: none; stroke: var(--ring); stroke-width: 1.8; transform: rotate(90deg); }
.dring { stroke-dasharray: 0px calc(var(--v) * var(--k) * 270px) calc(270px - var(--v) * var(--k) * 270px) 360px; }
.darc { stroke: var(--arc); stroke-dasharray: 0px calc(var(--o) * 270px) calc((var(--v) - var(--o)) * 270px) 360px; }
.bi .darc { stroke-width: 2.4; }
.dptr { stroke: var(--ptr); stroke-width: 1.8; transform: rotate(calc(90deg + var(--v) * 270deg)); }
.mid { align-items: flex-start; }
.mid input { appearance: none; width: 10px; height: 10px; border: 1px solid #222; margin: 8px 0 0 8px; }
.letter { width: 15px; height: 14px; margin-top: 15px; border: 1px solid #222; font-size: 9px; line-height: 12px; }
.lo { background: #ff9000; } .lc { background: #1ce69c; } .lb { background: #3fce00; } .la { background: #ffe000; }

.display { flex: 1; margin: 4px 4px 4px 3px; background: #191d22; border-radius: 5px; padding: 4px 4px 0; font: 11px/16px Roboto, sans-serif; min-width: 300px; }
.graph { width: 100%; height: 76px; }
.params { display: grid; grid-template-columns: 191fr 110fr; gap: 5px; padding-top: 2px; }
.env { display: grid; grid-template-columns: 48px 48px 48px 1fr; grid-auto-rows: 33px; color: #f06a10; }
.wav { display: grid; grid-template-columns: 56px 1fr; grid-auto-rows: 33px; color: #f4d834; }
.env, .wav { grid-template-rows: 15px; align-content: start; }
.params h4 { grid-column: 1 / -1; font-weight: 400; font-size: 11px; line-height: 14px; color: #97a3ac; border-bottom: 1px solid #7d868d; display: flex; align-items: center; gap: 2px; }
.params h4 i { width: 8px; height: 8px; background: #f87400; }
.params h4 .open { background: none; border: 1px solid #f87400; }
.params dt { color: #97a3ac; line-height: 17px; }
.params dl { white-space: nowrap; }
.params dd { padding-left: 2px; line-height: 16px; display: flex; align-items: center; gap: 10px; }
.params .wide { grid-column: span 3; }
.params u { width: 6px; height: 3px; background: currentColor; clip-path: polygon(0 0, 100% 0, 50% 100%); }
.params .spread { justify-content: space-between; padding-right: 12px; }
.params button { width: 13px; height: 13px; border: 0; background: #ffc800; color: #222; font-size: 9px; line-height: 13px; }
.wav svg { margin: 4px 0 0 1px; }

.globals { width: 235px; display: grid; grid-template-rows: 15px; grid-auto-rows: 44px; row-gap: 4px; }
.globals .end { justify-content: flex-end; padding-right: 2px; }
.grow { display: grid; grid-template-columns: 108px 62px 1fr; padding: 1px 0 0 8px; background: #8d8d8d; border-radius: 7px 0 0 7px; }
.grow.four { grid-template-columns: 43px 65px 62px 1fr; }
.four .ctl:last-child > span { margin-left: -4px; }
.opts { display: grid; gap: 4px; align-content: start; padding: 5px 10px 0 1px; }
.opts.one { padding: 3px 0 0 1px; gap: 4px; }
.line { display: flex; justify-content: space-between; }
.chk { display: flex; align-items: center; gap: 4px; line-height: 15px; }
.chk input { appearance: none; width: 14px; height: 14px; border: 1px solid #222; }
.chk input:checked { background: #f87400; }
.opts .sel { height: 14px; }
.opts .gray { background: #949494; }
.opts .sel select { height: 12px; line-height: 12px; }
.s55 { width: 55px; } .s21 { width: 21px; } .s44 { width: 44px; } .r14 { width: 14px; font-size: 9px; }
.rackend { width: 21px; margin-left: 2px; border-radius: 0 5px 5px 0; background: linear-gradient(#b4b0af 19px, #8d8d8d 19px); border: solid #b4b0af; border-width: 0 2px 2px 0; }
.outmeter { width: 6px; height: 45px; margin: 82px 2px 0 3px; background: linear-gradient(transparent 4px, #999 4px, #999 5px, transparent 5px), linear-gradient(90deg, #191d22 2px, #555 2px, #555 4px, #191d22 4px); }
.dropdev { width: 112px; height: 211px; margin-top: -1px; background: #8d8d8d; display: grid; place-content: center; text-align: center; font-weight: 700; line-height: 17px; }

.footer { height: 42px; display: flex; padding: 0 10px 0 9px; }
.footer .orb { margin-top: 11px; }
.field { width: 231px; height: 24px; margin: 9px 9px 0 0; border: 4px solid #5a5a5a; border-radius: 3px; background: #8d8d8d; }
.field.long { width: auto; flex: 1; margin: 9px 9px 0; }
.overview { width: 279px; height: 33px; margin-right: 8px; background: #555; border-radius: 0 0 5px 5px; display: flex; align-items: flex-start; padding: 9px 4px 0 6px; }
.overview b { flex: 1; line-height: 24px; }
.mini { height: 18px; margin-top: 3px; background: #a8a6a5; font-weight: 700; font-size: 10px; line-height: 18px; overflow: hidden; white-space: nowrap; }
.m1 { width: 31px; }
.m2 { width: 11px; margin-left: 1px; background: repeating-linear-gradient(#aaa 0 3px, #777 3px 4px); }
.m3 { width: 127px; height: 22px; margin-top: 1px; border: 2px solid #000; display: flex; line-height: 18px; margin-left: 1px; }
.m3 .a { width: 33px; background: linear-gradient(90deg, #999 10px, #6f92d8 10px, #6f92d8 19px, #c08a54 19px, #c08a54 23px, #b8a060 23px); }
.m3 span { flex: 1; padding-left: 1px; }
.m3 .b { width: 20px; background: repeating-linear-gradient(#b0b0b0 0 3px, #808080 3px 4px); }
.m3 .c { width: 26px; background: #22262a; }
.m3 .d { width: 21px; background: repeating-linear-gradient(#b0b0b0 0 3px, #888 3px 4px); }
```
